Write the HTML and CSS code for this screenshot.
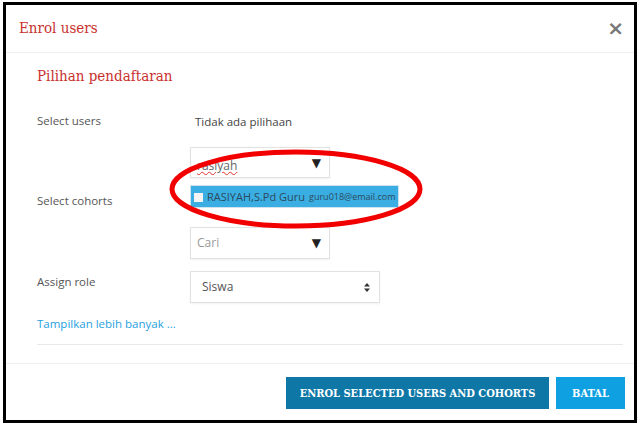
FILE: index.html
```html
<!DOCTYPE html>
<html lang="id">
<head>
    <meta charset="UTF-8">
    <meta name="viewport" content="width=device-width, initial-scale=1.0">
    <title>Enrol users</title>
    <link rel="stylesheet" href="styles.css">
</head>
<body>
    <div class="dialog">
        <div class="dialog-header">
            <h4>Enrol users</h4>
            <span class="close">&times;</span>
        </div>

        <div class="dialog-body">
            <h3>Pilihan pendaftaran</h3>

            <div class="form-row">
                <div class="label">Select users</div>
                <div class="field">
                    <span class="none">Tidak ada pilihaan</span>
                </div>
            </div>

            <div class="form-row row-cohorts">
                <div class="label">Select cohorts</div>
                <div class="field">
                    <div class="combo combo-search">
                        <span class="typed">rasiyah</span>
                        <span class="arrow">&#9660;</span>
                    </div>
                    <div class="suggestion">
                        <span class="check"></span>
                        <span class="name">RASIYAH,S.Pd Guru</span>
                        <span class="email">guru018@email.com</span>
                    </div>
                    <div class="combo combo-cari">
                        <span class="placeholder">Cari</span>
                        <span class="arrow">&#9660;</span>
                    </div>
                </div>
            </div>

            <div class="form-row row-role">
                <div class="label">Assign role</div>
                <div class="field">
                    <div class="combo combo-role">
                        <span>Siswa</span>
                        <span class="updown">
                            <svg width="6" height="9" viewBox="0 0 6 9"><path d="M0 3.5L3 0L6 3.5Z M0 5.5L3 9L6 5.5Z" fill="#333"/></svg>
                        </span>
                    </div>
                </div>
            </div>

            <a class="more" href="#">Tampilkan lebih banyak ...</a>
            <hr>
        </div>

        <div class="dialog-footer">
            <button class="btn-primary">ENROL SELECTED USERS AND COHORTS</button>
            <button class="btn-cancel">BATAL</button>
        </div>

        <svg class="marker" width="270" height="90" viewBox="0 0 270 90">
            <ellipse cx="135" cy="43" rx="124" ry="37" fill="none" stroke="#f20000" stroke-width="5"/>
        </svg>
    </div>
</body>
</html>
```

FILE: styles.css
```css
* {
    box-sizing: border-box;
}
body {
    margin: 0;
    background: #fff;
    font-family: "Open Sans", Arial, sans-serif;
    color: #555;
}
.dialog {
    position: relative;
    margin: 2px 3px;
    width: 634px;
    height: 421px;
    border: 3px solid #000;
    background: #fff;
    display: flex;
    flex-direction: column;
}
.dialog-header {
    height: 48px;
    border-bottom: 1px solid #eee;
    display: flex;
    align-items: center;
    justify-content: space-between;
    padding: 0 10px 2px 13px;
}
.dialog-header h4 {
    margin: 0;
    font-family: "DejaVu Serif Condensed", "DejaVu Serif", serif;
    font-weight: normal;
    font-size: 15px;
    color: #c9302c;
}
.close {
    font-family: "DejaVu Sans", Arial, sans-serif;
    font-size: 20px;
    font-weight: bold;
    color: #777;
    line-height: 1;
}
.dialog-body {
    padding: 12px 11px 0 31px;
    height: 311px;
    border-bottom: 1px solid #eee;
}
.dialog-body h3 {
    margin: 0 0 26px;
    font-family: "DejaVu Serif Condensed", "DejaVu Serif", serif;
    font-weight: normal;
    font-size: 15px;
    line-height: 22px;
    color: #c9302c;
}
.form-row {
    display: grid;
    grid-template-columns: 153px 1fr;
    font-size: 11.5px;
    line-height: 16px;
}
.label {
    color: #555;
}
.none {
    display: block;
    padding-left: 5px;
    padding-top: 1px;
    color: #444;
}
.row-cohorts {
    margin-top: 17px;
}
.row-cohorts .label {
    align-self: center;
    padding-bottom: 4px;
}
.combo {
    border: 1px solid #e2e2e2;
    box-shadow: 0 1px 2px rgba(0, 0, 0, 0.06);
    display: flex;
    align-items: center;
    justify-content: space-between;
    padding: 0 8px 0 6px;
    background: #fff;
    font-size: 12px;
}
.combo-search {
    width: 140px;
    height: 31px;
}
.combo-cari {
    width: 140px;
    height: 32px;
    margin-top: 19px;
}
.typed {
    color: #666;
    padding-top: 6px;
    text-decoration: underline wavy #e03030;
    text-decoration-thickness: 1px;
}
.placeholder {
    color: #999;
}
.arrow {
    font-family: "DejaVu Sans", sans-serif;
    font-size: 12px;
    color: #222;
}
.suggestion {
    margin-top: 7px;
    width: 209px;
    height: 23px;
    background: #3aaee2;
    border: 1px solid #cfe3ee;
    display: flex;
    align-items: center;
    padding-left: 3px;
    color: #2b4a5e;
    white-space: nowrap;
    overflow: hidden;
}
.check {
    flex-shrink: 0;
    width: 9px;
    height: 9px;
    background: #f4f4f4;
    margin: 2px 4px 0 0;
}
.name {
    font-size: 11px;
    margin-right: 4px;
}
.email {
    font-size: 9px;
    padding-top: 1px;
}
.row-role {
    margin-top: 12px;
}
.row-role .label {
    padding-top: 3px;
}
.combo-role {
    width: 190px;
    height: 32px;
    padding: 0 9px 0 11px;
    color: #555;
}
.updown {
    display: flex;
}
.more {
    display: block;
    margin-top: 13px;
    font-size: 11.5px;
    line-height: 16px;
    color: #1f9fdf;
    text-decoration: none;
}
hr {
    margin: 12px 0 0;
    border: none;
    border-top: 1px solid #e8e8e8;
}
.dialog-footer {
    display: flex;
    justify-content: flex-end;
    gap: 7px;
    padding: 13px 9px 0 0;
}
button {
    font-family: "DejaVu Serif Condensed", "DejaVu Serif", serif;
    font-size: 11px;
    font-weight: bold;
    color: #fff;
    border: none;
    height: 32px;
    cursor: pointer;
}
.btn-primary {
    background: #0f77a6;
    width: 263px;
}
.btn-cancel {
    background: #0fa0e2;
    width: 69px;
}
.marker {
    position: absolute;
    left: 155px;
    top: 141px;
    pointer-events: none;
}
```
